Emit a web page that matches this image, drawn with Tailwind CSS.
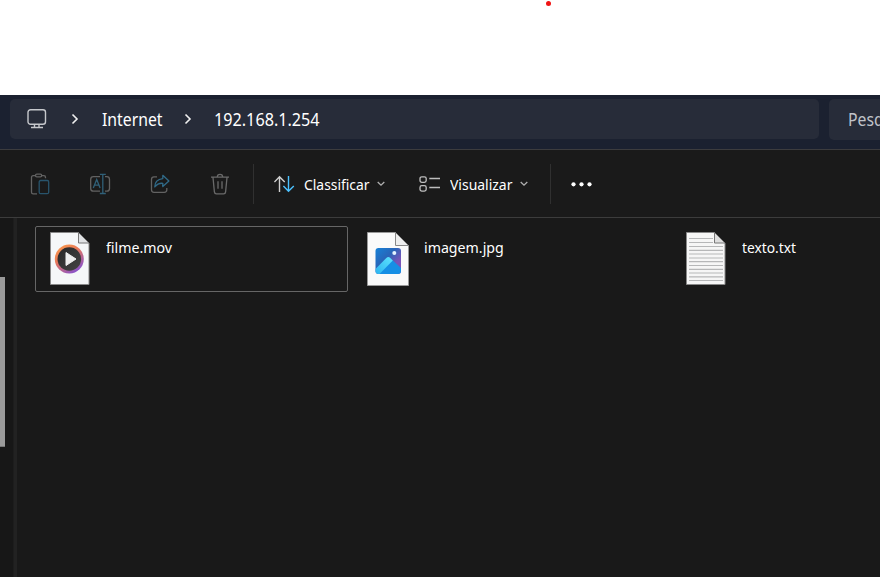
<!DOCTYPE html>
<html lang="pt">
<head>
<meta charset="utf-8">
<title>192.168.1.254</title>
<script src="https://cdn.jsdelivr.net/npm/@tailwindcss/browser@4"></script>
</head>
<body class="w-[880px] h-[577px] overflow-hidden bg-white flex flex-col font-['Segoe_UI','Noto_Sans',sans-serif] text-white relative">
  <span class="absolute left-[545.5px] top-[.5px] w-[5px] h-[5px] rounded-full bg-[#f01414]"></span>
  <header class="mt-[95px] h-[55px] shrink-0 bg-[#1b2130] border-b border-[#3c3c3e] flex pt-1 pl-[10px] gap-[10px] text-[17.5px] leading-10 overflow-hidden">
    <nav class="w-[809px] h-10 shrink-0 rounded-[5px] bg-[#272c39] flex items-center pl-[17px]">
      <svg class="w-5 h-5 shrink-0" viewBox="0 0 20 20" fill="none" stroke="#c6c8cc" stroke-width="1.4"><rect x="1" y=".8" width="17.5" height="14.5" rx="2.5"/><path d="M7.5 15.3v3M12 15.3v3M4 18.5h12"/></svg>
      <svg class="w-2 h-3 ml-6 shrink-0" viewBox="0 0 8 12" fill="none" stroke="#f0f0f0" stroke-width="1.6"><path d="M1.5 1.5 6 6 1.5 10.5"/></svg>
      <span class="w-[61px] ml-[23px] whitespace-nowrap"><span class="inline-block origin-left scale-x-[.9]">Internet</span></span>
      <svg class="w-2 h-3 ml-[21px] shrink-0" viewBox="0 0 8 12" fill="none" stroke="#f0f0f0" stroke-width="1.6"><path d="M1.5 1.5 6 6 1.5 10.5"/></svg>
      <span class="ml-[22px] whitespace-nowrap"><span class="inline-block origin-left scale-x-[.925]">192.168.1.254</span></span>
    </nav>
    <div class="w-[51px] h-[41px] shrink-0 overflow-hidden rounded-l-[5px] bg-[#272c39] pl-[19px] text-[#c0c3c9]"><span class="inline-block origin-left scale-x-[.9]">Pesquisar</span></div>
  </header>
  <div class="h-[68px] shrink-0 bg-[#1a1a1a] border-b border-[#3c3c3c] flex items-center text-[15px]">
    <svg class="w-5 h-[22px] ml-[30px] shrink-0" viewBox="0 0 20 22" fill="none" stroke-width="1.3"><path stroke="#626262" d="M6 2.7H3.2Q1.5 2.7 1.5 4.4v14.8q0 1.7 1.7 1.7H7M11.5 2.7h2.4q1.6 0 1.6 1.7v.8"/><rect x="5.5" y="1.2" width="6.2" height="2.6" rx="1.3" stroke="#626262"/><rect x="9.2" y="7.5" width="9.5" height="13.2" rx="1.5" stroke="#28546c"/></svg>
    <svg class="w-[22px] h-[22px] ml-[39px] shrink-0" viewBox="0 0 22 22" fill="none" stroke-width="1.3"><path stroke="#626262" d="M11 3.7H4.4Q1.7 3.7 1.7 6.4v9q0 2.7 2.7 2.7H11M16 3.7h1.8q2.7 0 2.7 2.7v9q0 2.7-2.7 2.7H16"/><path stroke="#306078" d="m4.3 15 3.4-8.5 3.4 8.5M5.5 12.2h4.4M10.8 1.3h6M13.8 1.3v19.2M10.8 20.5h6"/></svg>
    <svg class="w-5 h-[22px] ml-[39px] shrink-0" viewBox="0 0 20 22" fill="none" stroke-width="1.3" stroke-linejoin="round"><path stroke="#626262" d="M7 3.9H4Q1.5 3.9 1.5 6.4v10.4q0 2.5 2.5 2.5h10.3q2.5 0 2.5-2.5V15"/><path stroke="#306a88" d="M12.8 2.3 18.9 8l-6.1 5.6v-3.3q-4.7-.5-8 3.6 0-7.5 8-8.3Z"/></svg>
    <svg class="w-5 h-[22px] ml-10 shrink-0" viewBox="0 0 20 22" fill="none" stroke="#6a6a6a" stroke-width="1.3"><path d="M1 4.2h18M7.3 4Q7.3 1.3 10 1.3T12.7 4M3 4.5l1.4 14.4q.2 2 2 2h7.2q1.8 0 2-2L17 4.5M8 8.3v7.5M12 8.3v7.5"/></svg>
    <i class="w-px h-10 bg-[#303030] ml-[23px] shrink-0"></i>
    <svg class="w-[22px] h-[18px] ml-5 shrink-0" viewBox="0 0 22 18" fill="none" stroke-width="1.4"><path stroke="#d0d0d0" d="M5.5 17V1.7M.4 7l5.1-5.3L10.7 7"/><path stroke="#4cc2ff" d="M14.5 1v15.2M9.4 11l5.1 5.2 5.3-5.2"/></svg>
    <span class="w-[66px] ml-2 pt-px whitespace-nowrap"><span class="inline-block origin-left scale-x-[.925]">Classificar</span></span>
    <svg class="w-2 h-[6px] ml-[7px] shrink-0" viewBox="0 0 8 6" fill="none" stroke="#b0b0b0" stroke-width="1.3"><path d="m.7 1 3.3 3.2L7.3 1"/></svg>
    <svg class="w-[21px] h-[18px] ml-[34px] shrink-0" viewBox="0 0 21 18" fill="none" stroke="#bebebe" stroke-width="1.3"><rect x="1" y="1.8" width="6.2" height="5.5" rx="1.8"/><rect x="1" y="10.6" width="6.2" height="5.5" rx="1.8"/><path d="M10.3 3.5H21M10.3 12.5H21"/></svg>
    <span class="w-[63px] ml-[10px] pt-px whitespace-nowrap"><span class="inline-block origin-left scale-x-[.93]">Visualizar</span></span>
    <svg class="w-2 h-[6px] ml-[7px] shrink-0" viewBox="0 0 8 6" fill="none" stroke="#b0b0b0" stroke-width="1.3"><path d="m.7 1 3.3 3.2L7.3 1"/></svg>
    <i class="w-px h-10 bg-[#303030] ml-[22px] shrink-0"></i>
    <svg class="w-[22px] h-[6px] ml-5 shrink-0" viewBox="0 0 22 6" fill="#fff"><circle cx="2.5" cy="3.3" r="2.1"/><circle cx="10.5" cy="3.3" r="2.1"/><circle cx="18.5" cy="3.3" r="2.1"/></svg>
  </div>
  <main class="grow bg-[#191919] flex text-[15px] leading-5">
    <aside class="w-[13px] shrink-0 pt-[59px] bg-[#171717]"><div class="w-[5px] h-[170px] bg-[#9a9a9a] border-b border-[#777]"></div></aside>
    <div class="w-1 shrink-0 bg-[#222] border-l border-[#1d1d1d]"></div>
    <section class="pl-[18px] pt-2 flex items-start">
      <div class="w-[313px] h-[66px] border border-[#666] rounded-[2px] flex">
        <svg class="w-10 h-[53px] ml-[14px] mt-[5px] shrink-0" viewBox="0 0 40 53">
          <defs><linearGradient id="ring" x1="0" y1="0" x2=".65" y2="1"><stop stop-color="#ffa24a"/><stop offset=".45" stop-color="#e87858"/><stop offset="1" stop-color="#8952cb"/></linearGradient><linearGradient id="disc" x2="1" y2="1"><stop stop-color="#272727"/><stop offset="1" stop-color="#444"/></linearGradient></defs>
          <path d="M.5.5h28L39 11v41.5H.5Z" fill="#f5f7f8" stroke="#888"/><path d="M28.5.5V11H39Z" fill="#e0e2e4" stroke="#777"/>
          <circle cx="19.3" cy="27" r="14.5" fill="url(#ring)"/><circle cx="19.3" cy="27" r="11.8" fill="url(#disc)"/><path d="M16 20.5v13L26 27Z" fill="#eee" stroke="#eee" stroke-linejoin="round"/>
        </svg>
        <span class="ml-4 mt-[10px] whitespace-nowrap"><span class="inline-block origin-left scale-x-[.945]">filme.mov</span></span>
      </div>
      <div class="w-[318px] h-[66px] flex pl-[19px]">
        <svg class="w-[42px] h-[54px] mt-[6px] shrink-0" viewBox="0 0 42 54">
          <defs><linearGradient id="sky" x2="1" y2="1"><stop stop-color="#1683d8"/><stop offset=".4" stop-color="#2865b9"/><stop offset=".7" stop-color="#7854b8"/></linearGradient><linearGradient id="peak" x1="1" y1="0" x2="0" y2="1"><stop stop-color="#5de4ff"/><stop offset="1" stop-color="#2bb2ef"/></linearGradient><clipPath id="photo"><rect x="8.5" y="16" width="25.5" height="26" rx="3"/></clipPath></defs>
          <path d="M.5.5h28L41.5 13.5v40H.5Z" fill="#fafafa" stroke="#999"/><path d="M28.5.5v13h13Z" fill="#eee" stroke="#888"/>
          <g clip-path="url(#photo)"><path fill="url(#sky)" d="M8 16h26v26H8z"/><path fill="#168fe5" d="M12 42 23.5 29q1.5-1.5 3 0L36 38v4Z"/><path fill="url(#peak)" d="M8 37.5 19.3 26q2-2 4 0l2.5 2.5L12.5 42H8Z"/></g><circle cx="27.3" cy="21" r="2" fill="#e4f3ff"/>
        </svg>
        <span class="ml-[15px] mt-[11px] whitespace-nowrap"><span class="inline-block origin-left scale-x-[.945]">imagem.jpg</span></span>
      </div>
      <div class="h-[66px] flex pl-[19px]">
        <svg class="w-10 h-[53px] mt-[6px] ml-px shrink-0" viewBox="0 0 40 53">
          <path d="M.5.5h28L39 11v41.5H.5Z" fill="#f6f6f6" stroke="#888"/><path stroke="#b6b7b8" stroke-width="1.2" d="M3 6.5h24M3 10.5h24M3 14.5h34M3 18.3h34M3 22h34M3 26h34M3 29.7h34M3 33.5h34M3 37.3h34M3 41h34M3 44.8h34M3 48.5h34"/><path d="M28.5.5V11H39Z" fill="#dedede" stroke="#777"/>
        </svg>
        <span class="ml-4 mt-[11px] whitespace-nowrap"><span class="inline-block origin-left scale-x-[.92]">texto.txt</span></span>
      </div>
    </section>
  </main>
</body>
</html>
